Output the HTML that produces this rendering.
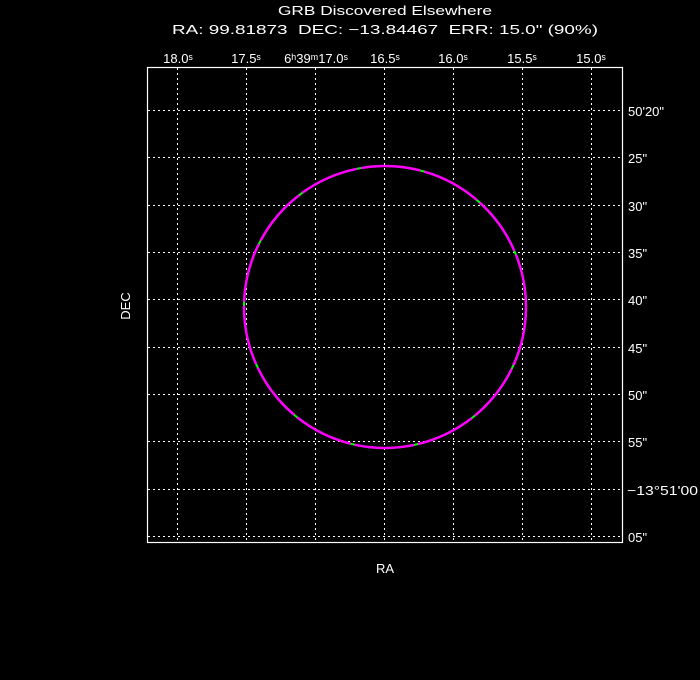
<!DOCTYPE html>
<html><head><style>
html,body{margin:0;padding:0;background:#000;}
svg{display:block}
text{font-family:"Liberation Sans",sans-serif;fill:#fff;font-size:13px;white-space:pre}
</style></head><body>
<svg width="700" height="680" xmlns="http://www.w3.org/2000/svg">
<text x="278" y="15" font-size="14" textLength="214" lengthAdjust="spacingAndGlyphs">GRB Discovered Elsewhere</text>
<text x="172" y="34" font-size="14" textLength="426" lengthAdjust="spacingAndGlyphs">RA: 99.81873  DEC: −13.84467  ERR: 15.0" (90%)</text>
<g stroke="#fff" stroke-width="1" stroke-dasharray="2,3" fill="none">
<line x1="177.5" y1="68" x2="177.5" y2="543"/>
<line x1="246.5" y1="68" x2="246.5" y2="543"/>
<line x1="315.5" y1="68" x2="315.5" y2="543"/>
<line x1="384.5" y1="68" x2="384.5" y2="543"/>
<line x1="453.5" y1="68" x2="453.5" y2="543"/>
<line x1="522.5" y1="68" x2="522.5" y2="543"/>
<line x1="591.5" y1="68" x2="591.5" y2="543"/>
<line x1="148" y1="110.5" x2="623" y2="110.5"/>
<line x1="148" y1="157.5" x2="623" y2="157.5"/>
<line x1="148" y1="205.5" x2="623" y2="205.5"/>
<line x1="148" y1="252.5" x2="623" y2="252.5"/>
<line x1="148" y1="299.5" x2="623" y2="299.5"/>
<line x1="148" y1="347.5" x2="623" y2="347.5"/>
<line x1="148" y1="394.5" x2="623" y2="394.5"/>
<line x1="148" y1="441.5" x2="623" y2="441.5"/>
<line x1="148" y1="489.5" x2="623" y2="489.5"/>
<line x1="148" y1="536.5" x2="623" y2="536.5"/>
</g>
<rect x="147.5" y="67.5" width="475" height="475" fill="none" stroke="#fff" stroke-width="1.2"/>
<circle cx="385" cy="307" r="141" fill="none" stroke="#0f0" stroke-width="2"/>
<circle cx="385" cy="307" r="141" fill="none" stroke="#f0f" stroke-width="2.5" stroke-dasharray="60,4"/>
<g font-size="12" text-anchor="middle">
<text x="178" y="63">18.0ˢ</text>
<text x="246" y="63">17.5ˢ</text>
<text x="316" y="63">6ʰ39ᵐ17.0ˢ</text>
<text x="385" y="63">16.5ˢ</text>
<text x="453" y="63">16.0ˢ</text>
<text x="522" y="63">15.5ˢ</text>
<text x="591" y="63">15.0ˢ</text>
</g>
<g font-size="12">
<text x="628" y="116">50'20"</text>
<text x="628" y="163">25"</text>
<text x="628" y="211">30"</text>
<text x="628" y="258">35"</text>
<text x="628" y="305">40"</text>
<text x="628" y="353">45"</text>
<text x="628" y="400">50"</text>
<text x="628" y="447">55"</text>
<text x="627" y="495" textLength="71" lengthAdjust="spacingAndGlyphs">−13°51'00</text>
<text x="628" y="542">05"</text>
</g>
<text x="385" y="573" text-anchor="middle" font-size="14">RA</text>
<text x="130" y="306" text-anchor="middle" font-size="14" transform="rotate(-90 130 306)">DEC</text>
</svg>
</body></html>
